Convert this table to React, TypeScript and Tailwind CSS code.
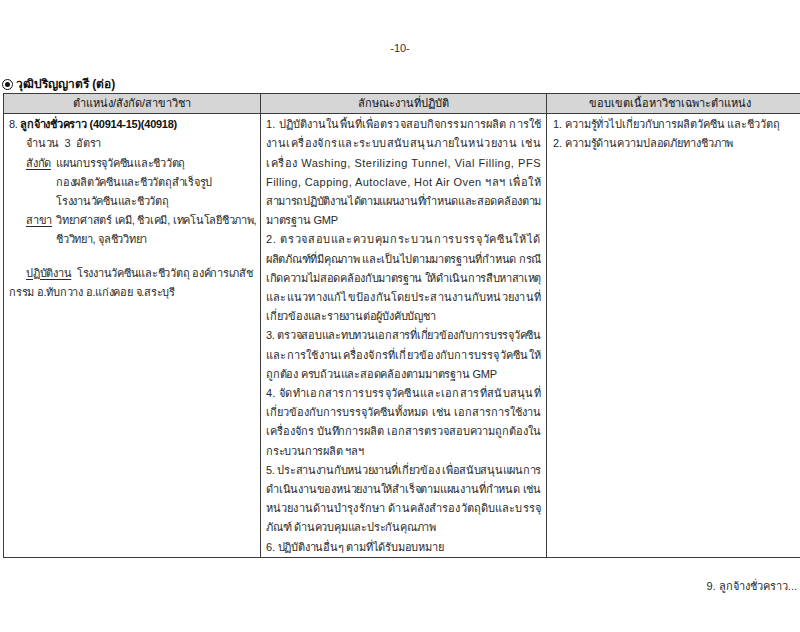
import React, { useLayoutEffect, useRef, useState } from "react";

const font = { fontFamily: "'Liberation Sans', Arial, sans-serif" };

type Line = { t: string; j?: boolean };

const mid: Line[] = [
  { t: "1. ปฏิบัติงานในพื้นที่เพื่อตรวจสอบกิจกรรมการผลิต การใช้", j: true },
  { t: "งานเครื่องจักรและระบบสนับสนุนภายในหน่วยงาน เช่น", j: true },
  { t: "เครื่อง Washing, Sterilizing Tunnel, Vial Filling, PFS", j: true },
  { t: "Filling, Capping, Autoclave, Hot Air Oven ฯลฯ เพื่อให้", j: true },
  { t: "สามารถปฏิบัติงานได้ตามแผนงานที่กำหนดและสอดคล้องตาม", j: true },
  { t: "มาตรฐาน GMP" },
  { t: "2. ตรวจสอบและควบคุมกระบวนการบรรจุวัคซีนให้ได้", j: true },
  { t: "ผลิตภัณฑ์ที่มีคุณภาพ และเป็นไปตามมาตรฐานที่กำหนด กรณี", j: true },
  { t: "เกิดความไม่สอดคล้องกับมาตรฐาน ให้ดำเนินการสืบหาสาเหตุ", j: true },
  { t: "และแนวทางแก้ไขป้องกันโดยประสานงานกับหน่วยงานที่", j: true },
  { t: "เกี่ยวข้องและรายงานต่อผู้บังคับบัญชา" },
  { t: "3. ตรวจสอบและทบทวนเอกสารที่เกี่ยวข้องกับการบรรจุวัคซีน", j: true },
  { t: "และการใช้งานเครื่องจักรที่เกี่ยวข้องกับการบรรจุวัคซีนให้", j: true },
  { t: "ถูกต้อง ครบถ้วนและสอดคล้องตามมาตรฐาน GMP" },
  { t: "4. จัดทำเอกสารการบรรจุวัคซีนและเอกสารที่สนับสนุนที่", j: true },
  { t: "เกี่ยวข้องกับการบรรจุวัคซีนทั้งหมด เช่น เอกสารการใช้งาน", j: true },
  { t: "เครื่องจักร บันทึกการผลิต เอกสารตรวจสอบความถูกต้องใน", j: true },
  { t: "กระบวนการผลิต ฯลฯ" },
  { t: "5. ประสานงานกับหน่วยงานที่เกี่ยวข้อง เพื่อสนับสนุนแผนการ", j: true },
  { t: "ดำเนินงานของหน่วยงานให้สำเร็จตามแผนงานที่กำหนด เช่น", j: true },
  { t: "หน่วยงานด้านบำรุงรักษา ด้านคลังสำรองวัตถุดิบและบรรจุ", j: true },
  { t: "ภัณฑ์ ด้านควบคุมและประกันคุณภาพ" },
  { t: "6. ปฏิบัติงานอื่นๆ ตามที่ได้รับมอบหมาย" },
];

function countUnits(text: string): number {
  try {
    const Seg = (Intl as any).Segmenter;
    if (Seg) {
      return Array.from(new Seg("th", { granularity: "grapheme" }).segment(text)).length;
    }
  } catch (e) {
    /* ignore */
  }
  return text.length;
}

function JLine({ text, width }: { text: string; width: number }) {
  const ref = useRef<HTMLSpanElement>(null);
  const [ls, setLs] = useState<number>(0);
  useLayoutEffect(() => {
    const el = ref.current;
    if (!el) return;
    const n = Math.max(1, countUnits(text) - 1);
    el.style.letterSpacing = "0px";
    let w = el.getBoundingClientRect().width;
    let l = (width - w) / n;
    for (let k = 0; k < 3; k++) {
      el.style.letterSpacing = l + "px";
      w = el.getBoundingClientRect().width;
      l += (width - w) / n;
    }
    setLs(l);
  }, [text, width]);
  return (
    <span ref={ref} className="inline-block whitespace-nowrap" style={{ letterSpacing: ls + "px" }}>
      {text}
    </span>
  );
}

export default function App() {
  return (
    <div
      className="w-[800px] h-[632px] overflow-hidden bg-white text-[#2a2a2a] text-[11px] leading-[19.2px]"
      style={font}
    >
      <div className="pt-[39px] text-center text-[11px] text-[#333]">-10-</div>

      <div className="mt-[17px] flex items-center gap-[3px] pl-[2px] h-[18px]">
        <span className="flex h-[11px] w-[11px] items-center justify-center rounded-full border-[1.5px] border-[#111]">
          <span className="h-[5px] w-[5px] rounded-full bg-[#111]" />
        </span>
        <span className="font-bold text-[12px] text-[#111]">วุฒิปริญญาตรี (ต่อ)</span>
      </div>

      <div className="ml-[3px] w-[810px] border-l border-t border-[#3c3c3c]">
        <div className="grid grid-cols-[257px_286px_1fr] bg-[#d6d6d6] border-b border-[#3c3c3c] h-[20px]">
          <div className="text-center border-r border-[#3c3c3c] text-[#111]">ตำแหน่ง/สังกัด/สาขาวิชา</div>
          <div className="text-center border-r border-[#3c3c3c] text-[#111]">ลักษณะงานที่ปฏิบัติ</div>
          <div className="text-center pr-[20px] text-[#111]">ขอบเขตเนื้อหาวิชาเฉพาะตำแหน่ง</div>
        </div>
        <div className="grid grid-cols-[257px_286px_1fr] border-b border-[#3c3c3c] h-[444px]">
          <div className="border-r border-[#3c3c3c] pl-[5px] pt-[1px] tracking-[-0.25px]">
            <div className="whitespace-nowrap">
              8. <span className="font-bold text-[#111]">ลูกจ้างชั่วคราว (40914-15)(40918)</span>
            </div>
            <div className="pl-[17px]">จำนวน&nbsp; 3&nbsp; อัตรา</div>
            <div className="flex pl-[17px]">
              <span className="w-[30px] shrink-0 underline underline-offset-2">สังกัด</span>
              <div>
                <div>แผนกบรรจุวัคซีนและชีววัตถุ</div>
                <div>กองผลิตวัคซีนและชีววัตถุสำเร็จรูป</div>
                <div>โรงงานวัคซีนและชีววัตถุ</div>
              </div>
            </div>
            <div className="flex pl-[17px]">
              <span className="w-[30px] shrink-0 underline underline-offset-2">สาขา</span>
              <div>
                <div className="whitespace-nowrap">วิทยาศาสตร์ เคมี, ชีวเคมี, เทคโนโลยีชีวภาพ,</div>
                <div>ชีววิทยา, จุลชีววิทยา</div>
              </div>
            </div>
            <div className="mt-[14px] pl-[17px] whitespace-nowrap">
              <span className="underline underline-offset-2">ปฏิบัติงาน</span>&nbsp; โรงงานวัคซีนและชีววัตถุ องค์การเภสัช
            </div>
            <div>กรรม อ.ทับกวาง อ.แก่งคอย จ.สระบุรี</div>
          </div>
          <div className="border-r border-[#3c3c3c] pl-[5px] pr-[5px] pt-[1px]">
            {mid.map((l, i) => (
              <div key={i} className="whitespace-nowrap">
                {l.j ? <JLine text={l.t} width={275} /> : <span className="tracking-[-0.2px]">{l.t}</span>}
              </div>
            ))}
          </div>
          <div className="pl-[6px] pt-[1px] tracking-[-0.1px]">
            <div>1. ความรู้ทั่วไปเกี่ยวกับการผลิตวัคซีน และชีววัตถุ</div>
            <div>2. ความรู้ด้านความปลอดภัยทางชีวภาพ</div>
          </div>
        </div>
      </div>

      <div className="mt-[19px] pr-[3px] text-right">9. ลูกจ้างชั่วคราว...</div>
    </div>
  );
}
